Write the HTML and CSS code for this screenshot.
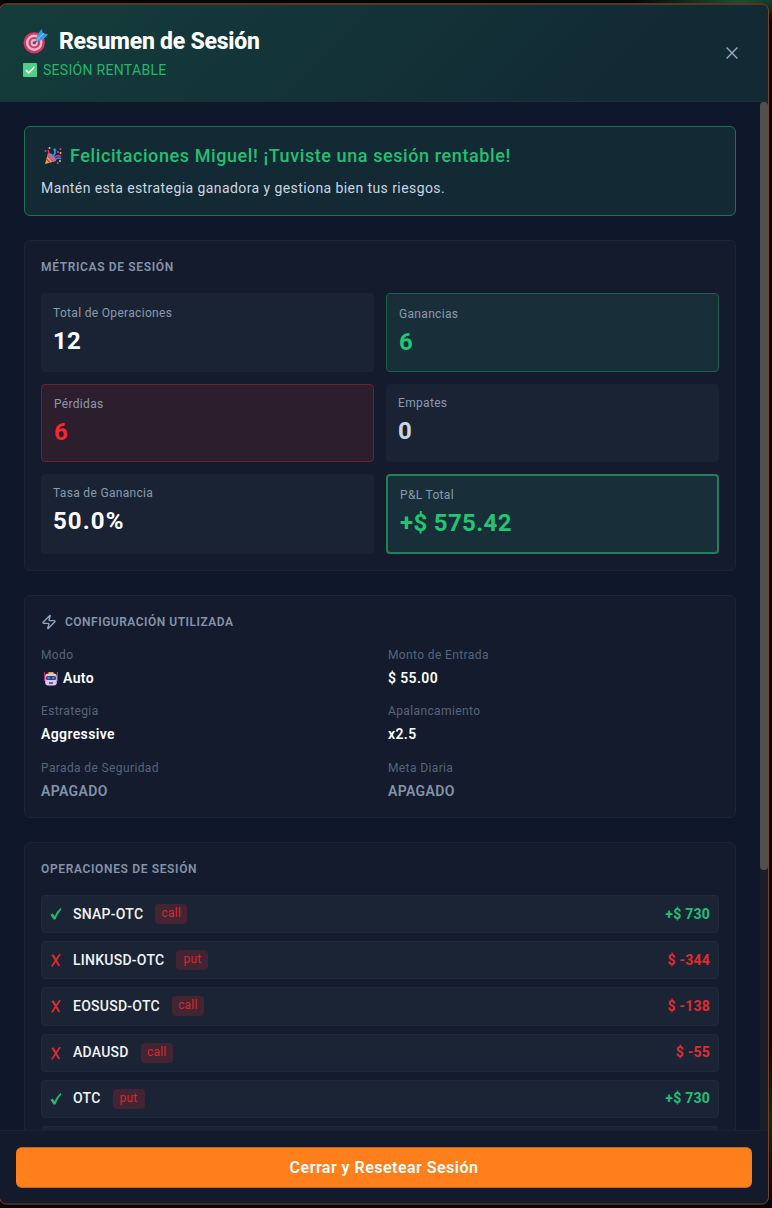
FILE: index.html
```
<!DOCTYPE html>
<html lang="es">
<head>
  <meta charset="UTF-8" />
  <meta name="viewport" content="width=device-width, initial-scale=1.0"/>
  <title>Resumen de Sesión</title>

  <link rel="stylesheet" href="styles.css">
</head>
<body>
  <div class="modal">
    <header class="modal-header">
      <div>
        <h2 class="modal-title">
          <svg class="icon-target" viewBox="0 0 24 24">
            <circle cx="10.8" cy="13.2" r="10.2" fill="#e0325e"/>
            <circle cx="10.8" cy="13.2" r="7.9" fill="#d5bdd3"/>
            <circle cx="10.8" cy="13.2" r="5.6" fill="#e0325e"/>
            <circle cx="10.8" cy="13.2" r="3.5" fill="#d5bdd3"/>
            <circle cx="10.8" cy="13.2" r="1.5" fill="#9c2854"/>
            <path d="M11 13.4L18 6.4" stroke="#46586f" stroke-width="1.2"/>
            <path d="M12.6 11.6L14 5L18 0L19 4L24 5L19 10.5Z" fill="#2e9cf0"/>
            <path d="M13 11L20 4" stroke="#79c7f7" stroke-width="1.2"/>
          </svg>
          <span>Resumen de Sesión</span>
        </h2>
        <p class="status">
          <svg class="icon-check" viewBox="0 0 14 14">
            <rect width="14" height="14" rx="1" fill="#4fd185"/>
            <path d="M2.8 7.2L5.7 10L11.2 4" fill="none" stroke="#fff" stroke-width="1.6"/>
          </svg>
          <span>SESIÓN RENTABLE</span>
        </p>
      </div>
      <button class="close-btn" aria-label="Cerrar">
        <svg viewBox="0 0 12 12"><path d="M.6 .6L11.4 11.4M11.4 .6L.6 11.4"/></svg>
      </button>
    </header>

    <div class="modal-body">
      <div class="content">
        <div class="message">
          <h3 class="message-title">
            <svg class="icon-party" viewBox="0 0 18 18">
              <path d="M1 17L4 6Q10 8 12 14Z" fill="#f0a33c"/>
              <path d="M2.5 12L6 15.6M3.6 8.5L9 14.6" stroke="#a74b78" stroke-width="1.4"/>
              <ellipse cx="8" cy="10" rx="2.2" ry="5" transform="rotate(-43 8 10)" fill="#c06c8c"/>
              <path d="M8 9Q13 7 10 2M10 1.5L12 4" fill="none" stroke="#2994e8" stroke-width="1.8"/>
              <path d="M5 7Q5 5 4 3M11 10Q14 8 17 9.5" fill="none" stroke="#e32e9c" stroke-width="1.5"/>
              <path d="M12 12Q15 10 17 12" fill="none" stroke="#2994e8" stroke-width="1.6"/>
              <g fill="#e32e9c"><circle cx="1.5" cy="4" r="1"/><circle cx="14" cy="5" r="1"/><circle cx="16.5" cy="2" r="1"/><circle cx="13.7" cy="16" r="1"/></g>
              <g fill="#f6c644"><circle cx="5.5" cy="1" r="1"/><circle cx="16.5" cy="6" r="1"/><circle cx="16" cy="14" r="1"/></g>
            </svg>
            <span>Felicitaciones Miguel! ¡Tuviste una sesión rentable!</span>
          </h3>
          <p class="message-text">Mantén esta estrategia ganadora y gestiona bien tus riesgos.</p>
        </div>

        <section class="card metrics-card">
          <h4 class="card-title">MÉTRICAS DE SESIÓN</h4>
          <div class="metrics">
            <div class="metric">
              <p class="metric-label">Total de Operaciones</p>
              <p class="metric-value">12</p>
            </div>
            <div class="metric win">
              <p class="metric-label">Ganancias</p>
              <p class="metric-value">6</p>
            </div>
            <div class="metric loss">
              <p class="metric-label">Pérdidas</p>
              <p class="metric-value">6</p>
            </div>
            <div class="metric draw">
              <p class="metric-label">Empates</p>
              <p class="metric-value">0</p>
            </div>
            <div class="metric">
              <p class="metric-label">Tasa de Ganancia</p>
              <p class="metric-value rate">50.0%</p>
            </div>
            <div class="metric win total">
              <p class="metric-label">P&amp;L Total</p>
              <p class="metric-value">+$ 575.42</p>
            </div>
          </div>
        </section>

        <section class="card config-card">
          <h4 class="card-title">
            <svg class="icon-bolt" viewBox="0 0 24 24"><path d="M4 14a1 1 0 0 1-.78-1.63l9.9-10.2a.5.5 0 0 1 .86.46l-1.92 6.02A1 1 0 0 0 13 10h7a1 1 0 0 1 .78 1.63l-9.9 10.2a.5.5 0 0 1-.86-.46l1.92-6.02A1 1 0 0 0 11 14z"/></svg>
            <span>CONFIGURACIÓN UTILIZADA</span>
          </h4>
          <div class="config">
            <div>
              <p class="config-label">Modo</p>
              <p class="config-value">
                <svg class="icon-robot" viewBox="0 0 16 16">
                  <path d="M1.6 1V10M14.4 1V10" stroke="#c52b63" stroke-width="1.2"/>
                  <rect x="5.5" y="1" width="5" height="3" fill="#f5a623"/>
                  <rect x="2.2" y="2.6" width="11.6" height="12" rx="3" fill="#dcc6ee"/>
                  <rect x="3" y="5" width="10" height="4" rx="1.5" fill="#343c72"/>
                  <circle cx="5.6" cy="7" r="1.2" fill="#2d9be8"/>
                  <circle cx="10.4" cy="7" r="1.2" fill="#2d9be8"/>
                  <rect x="6" y="11.3" width="4" height="1.4" fill="#453760"/>
                </svg>
                <span>Auto</span>
              </p>
            </div>
            <div>
              <p class="config-label">Monto de Entrada</p>
              <p class="config-value">$ 55.00</p>
            </div>
            <div>
              <p class="config-label">Estrategia</p>
              <p class="config-value">Aggressive</p>
            </div>
            <div>
              <p class="config-label">Apalancamiento</p>
              <p class="config-value">x2.5</p>
            </div>
            <div>
              <p class="config-label">Parada de Seguridad</p>
              <p class="config-value off">APAGADO</p>
            </div>
            <div>
              <p class="config-label">Meta Diaria</p>
              <p class="config-value off">APAGADO</p>
            </div>
          </div>
        </section>

        <section class="card trades-card">
          <h4 class="card-title">OPERACIONES DE SESIÓN</h4>
          <ul class="trades" id="tradeList"></ul>
        </section>
      </div>
      <div class="scrollbar"><div class="thumb"></div></div>
    </div>

    <footer class="modal-footer">
      <button class="reset-btn">Cerrar y Resetear Sesión</button>
    </footer>
  </div>

  <script>
    const trades = [
      { asset: "SNAP-OTC", type: "call", amount: "+$ 730", win: true },
      { asset: "LINKUSD-OTC", type: "put", amount: "$ -344", win: false },
      { asset: "EOSUSD-OTC", type: "call", amount: "$ -138", win: false },
      { asset: "ADAUSD", type: "call", amount: "$ -55", win: false },
      { asset: "OTC", type: "put", amount: "+$ 730", win: true },
      { asset: "", type: "", amount: "", win: true }
    ];

    const check = '<svg class="mark" viewBox="0 0 12 14"><path d="M.4 7.8L2.8 6.4L4.5 9.2Q7 4.2 10.8 .8L11.3 2.6Q7.6 6.6 5.4 12.6L3.5 12.6Z"/></svg>';
    const cross = '<svg class="mark" viewBox="0 0 12 14"><path d="M1.2 2L3.8 1.4L6 5.5L9.2 1L11 1.2L7 7.2L10.2 12.4L8.4 13.2L5.8 9L2.8 13.6L.9 13.4L4.7 7.2Z"/></svg>';

    document.getElementById("tradeList").innerHTML = trades.map(t => `
      <li class="trade ${t.win ? "won" : "lost"}">
        ${t.win ? check : cross}
        <span class="asset">${t.asset}</span>
        <span class="type">${t.type}</span>
        <span class="amount">${t.amount}</span>
      </li>`).join('');
  </script>
</body>
</html>
```
FILE: styles.css
```
* {
  margin: 0;
  padding: 0;
  box-sizing: border-box;
}

body {
  font-family: Roboto, sans-serif;
  background: radial-gradient(ellipse 110px 22px at 740px 0, #1b5135, transparent), radial-gradient(ellipse 10px 80px at 772px 1120px, #043519, transparent), #040509;
  height: 100vh;
  padding-top: 3px;
  overflow: hidden;
}

.modal {
  width: 770px;
  height: 1202px;
  margin-left: -1px;
  display: flex;
  flex-direction: column;
  background-color: #0f172a;
  border: 1px solid #7b4320;
  border-top: 2px solid #59371f;
  border-bottom: 2px solid #4b2b1a;
  border-radius: 8px;
  overflow: hidden;
}

.modal-header {
  height: 97px;
  padding: 20px 30px 0 23px;
  display: flex;
  justify-content: space-between;
  background: linear-gradient(135deg, #143d3b, #122a34 80%);
  border-bottom: 1px solid #1b3039;
}

.modal-title {
  display: flex;
  align-items: center;
  height: 32px;
  gap: 11px;
  color: #fff;
  font-size: 23px;
  font-weight: 800;
  line-height: 32px;
  letter-spacing: -0.25px;
}

.modal-title span {
  padding-top: 1px;
}

.icon-target {
  width: 25px;
  height: 25px;
}

.status {
  display: flex;
  align-items: center;
  gap: 6px;
  margin-top: 3px;
  color: #22b66e;
  font-size: 14px;
  line-height: 20px;
  letter-spacing: 0.3px;
}

.icon-check {
  width: 14px;
  height: 14px;
}

.close-btn {
  width: 12px;
  height: 12px;
  margin-top: 22px;
  background: none;
  border: none;
}

.close-btn svg {
  display: block;
  fill: none;
  stroke: #9ba9bd;
  stroke-width: 1.4;
}

.modal-body {
  flex: 1;
  min-height: 0;
  display: flex;
}

.content {
  flex: 1;
  padding: 24px;
  overflow: hidden;
}

.scrollbar {
  width: 8px;
  background-color: #191e28;
}

.thumb {
  height: 768px;
  border-radius: 4px;
  background-color: #505050;
}

.message {
  height: 90px;
  padding: 15px 16px;
  background-color: #132a34;
  border: 1px solid #1a7253;
  border-radius: 6px;
}

.message-title {
  display: flex;
  align-items: center;
  gap: 8px;
  padding-left: 3px;
  color: #22c074;
  font-size: 18px;
  font-weight: 500;
  line-height: 28px;
  letter-spacing: 0.59px;
}

.icon-party {
  width: 18px;
  height: 18px;
}

.message-text {
  margin-top: 7px;
  color: #cbd5e1;
  font-size: 14px;
  line-height: 22px;
  letter-spacing: 0.42px;
}

.card {
  margin-top: 24px;
  padding: 17px 16px 16px;
  background-color: #131b2d;
  border: 1px solid #1b2536;
  border-radius: 6px;
}

.card-title {
  display: flex;
  align-items: center;
  gap: 8px;
  height: 18px;
  color: #8594a9;
  font-size: 12px;
  font-weight: 600;
  line-height: 18px;
  letter-spacing: 0.65px;
}

.metrics-card {
  height: 331px;
}

.metrics {
  display: grid;
  grid-template-columns: 1fr 1fr;
  grid-template-rows: 79px 78px 80px;
  gap: 12px;
  margin-top: 17px;
}

.metric {
  padding: 10px 12px;
  background-color: #192334;
  border-radius: 4px;
}

/* first row has one extra pixel of height */
.metric:nth-child(-n+2) {
  padding-top: 11px;
}

.metric-label {
  color: #8b9aae;
  font-size: 12px;
  line-height: 18px;
  letter-spacing: 0.32px;
}

.metric-value {
  color: #fff;
  font-size: 24px;
  font-weight: 700;
  line-height: 32px;
  margin-top: 3px;
  letter-spacing: 0.35px;
}

.metric-value.rate {
  letter-spacing: 1.1px;
}

.metric.win {
  background-color: #182e38;
  border: 1px solid #1a6149;
}

.metric.win .metric-value {
  color: #22c574;
}

.metric.loss {
  background-color: #2d1e2e;
  border: 1px solid #6b2230;
}

.metric.loss .metric-value {
  color: #f02b2e;
}

.metric.draw .metric-value {
  color: #cbd5e1;
}

.metric.total {
  border: 2px solid #1f805a;
}

.config-card {
  height: 223px;
}

.config-card .card-title {
  letter-spacing: 0.5px;
}

.icon-bolt {
  width: 16px;
  height: 16px;
  fill: none;
  stroke: #94a3b8;
  stroke-width: 2;
}

.config {
  display: grid;
  grid-template-columns: 1fr 1fr;
  grid-auto-rows: 44px;
  gap: 12.3px 16px;
  margin-top: 15px;
}

.config-label {
  color: #576579;
  font-size: 12px;
  line-height: 18px;
  letter-spacing: 0.38px;
}

.config-value {
  display: flex;
  align-items: center;
  gap: 4px;
  margin-top: 4px;
  color: #fff;
  font-size: 14px;
  font-weight: 600;
  line-height: 21px;
  letter-spacing: 0.38px;
}

.config-value.off {
  color: #8593a8;
}

.icon-robot {
  width: 16px;
  height: 16px;
  margin-left: 2px;
}

.trades-card {
  height: 400px;
}

.trades {
  list-style: none;
  display: flex;
  flex-direction: column;
  gap: 8px;
  margin-top: 17px;
}

.trade {
  display: flex;
  align-items: center;
  height: 38.2px;
  flex-shrink: 0;
  padding: 0 8px;
  background-color: #1a2435;
  border: 1px solid #1e293b;
  border-radius: 4px;
}

.mark {
  width: 12px;
  height: 14px;
  margin-right: 11px;
}

.won .mark,
.won .amount {
  fill: #22b96f;
  color: #22c074;
}

.lost .mark,
.lost .amount {
  fill: #dc2c30;
  color: #e02d31;
}

.asset,
.amount {
  padding-bottom: 1px;
  font-size: 14px;
}

.asset {
  color: #f1f3f6;
  font-weight: 500;
  letter-spacing: 0.25px;
}

.type {
  min-width: 32px;
  height: 20px;
  margin-left: 12px;
  padding: 0 5px;
  background-color: #422432;
  border-radius: 4px;
  color: #d52b30;
  font-size: 12px;
  line-height: 18px;
  letter-spacing: 0.2px;
  text-align: center;
}

.amount {
  margin-left: auto;
  font-weight: 700;
  letter-spacing: 0.25px;
}

.modal-footer {
  height: 73px;
  padding: 16px 16px 15px;
  background-color: #121a2c;
  border-top: 1px solid #192234;
}

.reset-btn {
  width: 100%;
  height: 41px;
  background-color: #ff7f1c;
  border: 1px solid #c66420;
  border-width: 1px 0;
  border-radius: 6px;
  color: #fff;
  font-family: inherit;
  font-size: 16px;
  font-weight: 600;
  letter-spacing: 0.48px;
  cursor: pointer;
}
```
